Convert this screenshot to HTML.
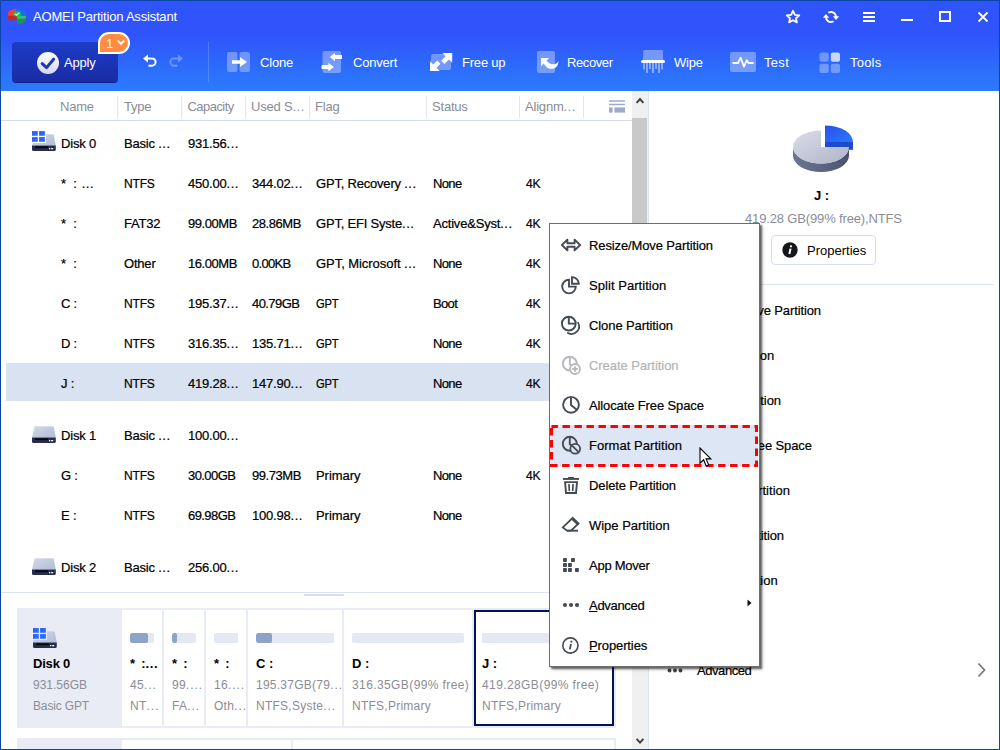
<!DOCTYPE html>
<html lang="en">
<head>
<meta charset="utf-8">
<title>AOMEI Partition Assistant</title>
<style>
*{box-sizing:border-box;margin:0;padding:0}
html,body{width:1000px;height:750px;overflow:hidden;background:#fff}
body{position:relative;color:#000;font-family:"Liberation Sans",sans-serif;font-size:13px;letter-spacing:-0.2px;-webkit-font-smoothing:antialiased}
.abs{position:absolute}
.t{position:absolute;white-space:nowrap;line-height:20px;height:20px}
/* window frame */
#frame{position:absolute;left:0;top:0;width:1000px;height:750px;border:1px solid #0a46a8;z-index:50;pointer-events:none}
/* header */
#hdr{position:absolute;left:0;top:0;width:1000px;height:91px;background:linear-gradient(to bottom,#2f54fb 0,#2f54fb 35px,#2b7cfc 91px)}
#hdr .t{color:#fff}
.tb{font-size:13px;letter-spacing:-0.2px}
/* table */
.hd{color:#8b8c96}
.e{letter-spacing:.5px}
.e2{letter-spacing:1px}
.nm{word-spacing:0}
.st{word-spacing:4px}
.colsep{position:absolute;top:96px;width:1px;height:22px;background:#e1e5ee}
.row .t{top:11px;-webkit-text-stroke:.22px #000}
.row{position:absolute;left:0;width:632px;height:40px}
/* disk map */
.cell{position:absolute;top:610px;height:116px;background:#fff}
.cell .bar{position:absolute;left:8px;top:23px;height:10px;border-radius:2px;background:#e3e8f3;overflow:hidden}
.cell .bar i{display:block;height:10px;background:#8fa3c8;border-radius:2px}
.cell .n{position:absolute;left:8px;top:44px;font-weight:bold;font-size:13px;line-height:20px;white-space:nowrap;color:#000;letter-spacing:0}
.cell .g{position:absolute;left:8px;font-size:12px;line-height:20px;white-space:nowrap;color:#8b8c96;letter-spacing:.25px}
.g1{top:65px}.g2{top:86px}
/* menu */
#menu{position:absolute;left:549px;top:223px;width:211px;height:444px;background:#fff;border:1px solid #6e6e6e;box-shadow:2px 2px 1.5px rgba(0,0,0,.5),3px 3px 3px rgba(0,0,0,.18);z-index:20}
#menu .mi{position:absolute;left:0;width:209px;height:40px}
#menu .mi .t{left:39px;top:11px;-webkit-text-stroke:.2px currentColor}
#menu .mi svg{position:absolute;left:11px;top:11px;overflow:visible}
u{text-decoration:underline;text-underline-offset:1px}
/* right panel */
.rp{position:absolute;left:697px;white-space:nowrap;line-height:20px;-webkit-text-stroke:.2px #000}
</style>
</head>
<body>

<!-- ================= HEADER ================= -->
<div id="hdr">
  <!-- logo -->
  <svg class="abs" style="left:7px;top:8px" width="20" height="17" viewBox="0 0 20 17">
    <path d="M9 0.9 C14 0.6 18.6 2.6 19 5.2 L19 8.8 L13 8 L9 6 Z" fill="#1f6de6"/>
    <path d="M1 7 L10.2 6.6 L10.2 11.6 C6.5 12.9 2 12.9 1 11.4 Z" fill="#c22a28"/>
    <path d="M1 5.2 C1.4 2.6 5 1 9 0.9 L9.2 7.4 L1 8 Z" fill="#f63c3a"/>
    <path d="M10 8 L18.9 8.2 L18.9 12.4 C18 14.6 14 15.8 10 15.8 Z" fill="#1e9450"/>
    <path d="M10 7.8 L18.9 8 L18.9 10.6 L10 10.8 Z" fill="#33c273"/>
    <ellipse cx="10.1" cy="5.9" rx="4" ry="2.7" fill="#12c252"/>
    <path d="M8 5.8 L9.6 7.2 L12.4 4.6" fill="none" stroke="#d8ffe0" stroke-width="1.1"/>
  </svg>
  <div class="t" style="left:33px;top:7px">AOMEI Partition Assistant</div>

  <!-- title bar buttons -->
  <svg class="abs" style="left:785px;top:9px" width="16" height="16" viewBox="0 0 16 16"><path d="M8 1.8 L9.9 5.9 L14.3 6.4 L11 9.3 L11.9 13.4 L8 11.3 L4.1 13.4 L5 9.3 L1.7 6.4 L6.1 5.9 Z" fill="none" stroke="#fff" stroke-width="1.8" stroke-linejoin="round"/></svg>
  <svg class="abs" style="left:822px;top:9px" width="18" height="16" viewBox="0 0 18 16">
    <path d="M7.1 3.3 A5 5 0 0 1 14 8" fill="none" stroke="#fff" stroke-width="2" stroke-linecap="round"/>
    <path d="M10.9 12.7 A5 5 0 0 1 4 8" fill="none" stroke="#fff" stroke-width="2" stroke-linecap="round"/>
    <path d="M10.9 7.2 L17.1 7.2 L14 11 Z" fill="#fff"/>
    <path d="M0.9 8.7 L7.1 8.7 L4 4.9 Z" fill="#fff"/>
  </svg>
  <div class="abs" style="left:863px;top:12px;width:12px;height:2px;background:#fff"></div>
  <div class="abs" style="left:863px;top:16px;width:12px;height:2px;background:#fff"></div>
  <div class="abs" style="left:863px;top:20px;width:12px;height:2px;background:#fff"></div>
  <div class="abs" style="left:901px;top:19px;width:12px;height:2px;background:#fff"></div>
  <div class="abs" style="left:939px;top:11px;width:12px;height:11px;border:2px solid #fff"></div>
  <svg class="abs" style="left:977px;top:11px" width="12" height="12" viewBox="0 0 12 12"><path d="M1.5 1.5 L10.5 10.5 M10.5 1.5 L1.5 10.5" stroke="#fff" stroke-width="1.8"/></svg>

  <!-- Apply button -->
  <div class="abs" style="left:12px;top:42px;width:106px;height:40px;border-radius:4px;background:linear-gradient(to bottom,#1d3cc8 0,#1a2ca4 100%);box-shadow:0 1px 0 #0f1f86"></div>
  <svg class="abs" style="left:36px;top:51px" width="24" height="24" viewBox="0 0 24 24">
    <defs><linearGradient id="gA" x1="0" y1="0" x2="0" y2="1"><stop offset="0" stop-color="#ffffff"/><stop offset="1" stop-color="#d2d8f2"/></linearGradient></defs>
    <circle cx="12" cy="12" r="11" fill="url(#gA)"/>
    <path d="M6.2 12.6 L10.6 16.6 L17.6 8.2" fill="none" stroke="#2437b2" stroke-width="3" stroke-linecap="round" stroke-linejoin="round"/>
  </svg>
  <div class="t tb" style="left:64px;top:53px">Apply</div>
  <!-- badge -->
  <div class="abs" style="left:98px;top:32px;width:32px;height:22px;border:2px solid #fff;border-radius:11px 11px 11px 0;background:#ff8c42"></div>
  <div class="t" style="left:106px;top:34px;font-size:13px;color:#fff">1</div>
  <svg class="abs" style="left:117px;top:40px" width="8" height="6" viewBox="0 0 8 6"><path d="M1.3 1.2 L4 3.9 L6.7 1.2" fill="none" stroke="#fff" stroke-width="1.9" stroke-linecap="round"/></svg>

  <!-- undo / redo -->
  <svg class="abs" style="left:142px;top:53px" width="16" height="16" viewBox="0 0 16 16"><path d="M5.5 5.5 H10 A3.6 3.6 0 0 1 10 12.7 H6.5" fill="none" stroke="#fff" stroke-width="2"/><path d="M1 5.5 L6 1.5 L6 9.5 Z" fill="#fff"/></svg>
  <svg class="abs" style="left:168px;top:53px;opacity:.3" width="16" height="16" viewBox="0 0 16 16"><path d="M10.5 5.5 H6 A3.6 3.6 0 0 0 6 12.7 H9.5" fill="none" stroke="#fff" stroke-width="2"/><path d="M15 5.5 L10 1.5 L10 9.5 Z" fill="#fff"/></svg>

  <div class="abs" style="left:208px;top:42px;width:1px;height:40px;background:rgba(255,255,255,.17)"></div>

  <!-- Clone -->
  <svg class="abs" style="left:226px;top:51px" width="26" height="22" viewBox="0 0 26 22">
    <rect x="1" y="1" width="10.5" height="20" rx="2" fill="#fff" fill-opacity=".32"/>
    <rect x="13.5" y="1" width="10.5" height="20" rx="2" fill="#fff" fill-opacity=".32"/>
    <path d="M6 9.2 H14 V6 L21 11 L14 16 V12.8 H6 Z" fill="#fff"/>
  </svg>
  <div class="t tb" style="left:260px;top:53px">Clone</div>

  <!-- Convert -->
  <svg class="abs" style="left:320px;top:50px" width="24" height="24" viewBox="0 0 24 24">
    <rect x="2.5" y="1" width="18.5" height="22" rx="2" fill="#fff" fill-opacity=".34"/>
    <path d="M22 5 H15 V2.8 L9.8 7 L15 11.2 V9 H22 Z" fill="#fff"/>
    <path d="M1.6 15 H8.4 V12.8 L13.8 17 L8.4 21.2 V19 H1.6 Z" fill="#fff"/>
  </svg>
  <div class="t tb" style="left:353px;top:53px">Convert</div>

  <!-- Free up -->
  <svg class="abs" style="left:428px;top:51px" width="26" height="22" viewBox="0 0 26 22">
    <rect x="3" y="3" width="20" height="16" rx="2" fill="#fff" fill-opacity=".32"/>
    <path d="M14.5 2 H24.2 V11.7 L21 8.5 L16.4 13.1 L13.1 9.8 L17.7 5.2 Z" fill="#fff"/>
    <path d="M11.7 20 H2 V10.3 L5.2 13.5 L9.2 9.5 L12.5 12.8 L8.5 16.8 Z" fill="#fff"/>
  </svg>
  <div class="t tb" style="left:462px;top:53px">Free up</div>

  <!-- Recover -->
  <svg class="abs" style="left:536px;top:50px" width="24" height="24" viewBox="0 0 24 24">
    <rect x="1" y="1" width="18" height="22" rx="2" fill="#fff" fill-opacity=".34"/>
    <path d="M5 8 L13.2 8 L10.6 10.6 C12.6 14.2 17.2 15.4 20.4 13.4 C21.4 12.6 22 11.8 22.2 10.8 C23 14.6 20.4 18.6 16.2 18.8 C12.2 19 9.2 16.4 7.8 13.4 L5 16.2 Z" fill="#fff"/>
  </svg>
  <div class="t tb" style="left:567px;top:53px;letter-spacing:-0.4px">Recover</div>

  <!-- Wipe -->
  <svg class="abs" style="left:640px;top:49px" width="26" height="25" viewBox="0 0 26 25">
    <rect x="3" y="1" width="20" height="11" rx="1.5" fill="#fff" fill-opacity=".34"/>
    <rect x="1" y="11" width="24" height="3" rx="1.5" fill="#fff"/>
    <path d="M4 14 V20.5 M10 14 V20 M16 14 V20 M22 14 V20.5" stroke="#fff" stroke-opacity=".42" stroke-width="2"/>
    <path d="M7 14 V24 M13 14 V24 M19 14 V24" stroke="#fff" stroke-opacity=".42" stroke-width="2"/>
  </svg>
  <div class="t tb" style="left:674px;top:53px">Wipe</div>

  <!-- Test -->
  <svg class="abs" style="left:729px;top:51px" width="28" height="22" viewBox="0 0 28 22">
    <rect x="1" y="1" width="26" height="20" rx="2" fill="#fff" fill-opacity=".34"/>
    <path d="M3.5 12 H9 L11.6 6.6 L15 15.6 L17.8 9.2 L19.6 12 H24.5" fill="none" stroke="#fff" stroke-width="1.8" stroke-linejoin="round"/>
  </svg>
  <div class="t tb" style="left:764px;top:53px;letter-spacing:0.3px">Test</div>

  <!-- Tools -->
  <svg class="abs" style="left:817.5px;top:50.5px" width="24" height="24" viewBox="0 0 24 24">
    <rect x="1.5" y="1.5" width="9.2" height="9.2" rx="2" fill="#fff" fill-opacity=".32"/>
    <rect x="12.8" y="1.5" width="9.2" height="9.2" rx="2" fill="#fff" fill-opacity=".75"/>
    <rect x="1.5" y="12.8" width="9.2" height="9.2" rx="2" fill="#fff" fill-opacity=".32"/>
    <rect x="12.8" y="12.8" width="9.2" height="9.2" rx="2" fill="#fff" fill-opacity=".32"/>
  </svg>
  <div class="t tb" style="left:850px;top:53px;letter-spacing:0.2px">Tools</div>
</div>

<!-- ================= TABLE ================= -->
<div id="table">
  <div class="t hd" style="top:97px;left:60px">Name</div>
  <div class="t hd" style="top:97px;left:124px">Type</div>
  <div class="t hd" style="top:97px;left:187.5px;letter-spacing:-0.55px">Capacity</div>
  <div class="t hd" style="top:97px;left:251px">Used S<span class="e">...</span></div>
  <div class="t hd" style="top:97px;left:315px">Flag</div>
  <div class="t hd" style="top:97px;left:432px">Status</div>
  <div class="t hd" style="top:97px;left:525px">Alignm<span class="e">...</span></div>
  <div class="colsep" style="left:117px"></div>
  <div class="colsep" style="left:181px"></div>
  <div class="colsep" style="left:245px"></div>
  <div class="colsep" style="left:309px"></div>
  <div class="colsep" style="left:426px"></div>
  <div class="colsep" style="left:519px"></div>
  <div class="colsep" style="left:583px"></div>
  <div class="abs" style="left:1px;top:120px;width:631px;height:1px;background:#d5dcec"></div>
  <svg class="abs" style="left:609px;top:100px" width="16" height="13" viewBox="0 0 16 13"><path d="M0 1 H16 M0 4.5 H16" stroke="#9caacd" stroke-width="1.6"/><rect x="0" y="7.4" width="3.6" height="5.2" fill="#9caacd"/><rect x="5.4" y="7.4" width="10.6" height="5.2" fill="#9caacd"/></svg>
  <div class="abs" style="left:6px;top:363px;width:626px;height:38px;background:#d8e2f1"></div>
  <svg class="abs" style="left:32px;top:131px" width="25" height="21" viewBox="0 0 25 21">
      <defs><linearGradient id="dk0" x1="0" y1="0" x2="1" y2="1"><stop offset="0" stop-color="#d3d9e8"/><stop offset="1" stop-color="#b1bbd4"/></linearGradient>
      <linearGradient id="wn0" x1="0" y1="0" x2="1" y2="1"><stop offset="0" stop-color="#2c54fb"/><stop offset="1" stop-color="#2e78fb"/></linearGradient></defs>
      <path d="M3.6 3.2 H20.6 Q21.6 3.2 21.9 4.2 L23.8 14.8 H0 L2.3 4.2 Q2.6 3.2 3.6 3.2 Z" fill="url(#dk0)"/>
      <path d="M0 14.4 H23.8 V18.4 Q23.8 20 22.2 20 H1.6 Q0 20 0 18.4 Z" fill="#262e4c"/>
      <rect x="3" y="15.4" width="13" height="1.7" fill="#05070f"/>
      <rect x="17" y="17" width="1.3" height="1.3" fill="#fff"/><rect x="19.2" y="17" width="2" height="1.3" fill="#fff"/>
      <rect x="0" y="0" width="14" height="12" fill="#fff"/>
      <rect x="0" y="0.1" width="5.8" height="4.7" fill="url(#wn0)"/><rect x="7.1" y="0.1" width="5.8" height="4.7" fill="url(#wn0)"/>
      <rect x="0" y="6.1" width="5.8" height="4.7" fill="url(#wn0)"/><rect x="7.1" y="6.1" width="5.8" height="4.7" fill="url(#wn0)"/>
    </svg>
  <svg class="abs" style="left:32px;top:426px" width="25" height="18" viewBox="0 0 25 18">
      <defs><linearGradient id="dk1" x1="0" y1="0" x2="1" y2="1"><stop offset="0" stop-color="#d3d9e8"/><stop offset="1" stop-color="#b1bbd4"/></linearGradient></defs>
      <path d="M3.6 0.2 H20.6 Q21.6 0.2 21.9 1.2 L23.8 11.8 H0 L2.3 1.2 Q2.6 0.2 3.6 0.2 Z" fill="url(#dk1)"/>
      <path d="M0 11.4 H23.8 V15.4 Q23.8 17 22.2 17 H1.6 Q0 17 0 15.4 Z" fill="#262e4c"/>
      <rect x="3" y="12.4" width="13" height="1.7" fill="#05070f"/>
      <rect x="17" y="14" width="1.3" height="1.3" fill="#fff"/><rect x="19.2" y="14" width="2" height="1.3" fill="#fff"/>
    </svg>
  <svg class="abs" style="left:32px;top:558px" width="25" height="18" viewBox="0 0 25 18">
      <defs><linearGradient id="dk2" x1="0" y1="0" x2="1" y2="1"><stop offset="0" stop-color="#d3d9e8"/><stop offset="1" stop-color="#b1bbd4"/></linearGradient></defs>
      <path d="M3.6 0.2 H20.6 Q21.6 0.2 21.9 1.2 L23.8 11.8 H0 L2.3 1.2 Q2.6 0.2 3.6 0.2 Z" fill="url(#dk2)"/>
      <path d="M0 11.4 H23.8 V15.4 Q23.8 17 22.2 17 H1.6 Q0 17 0 15.4 Z" fill="#262e4c"/>
      <rect x="3" y="12.4" width="13" height="1.7" fill="#05070f"/>
      <rect x="17" y="14" width="1.3" height="1.3" fill="#fff"/><rect x="19.2" y="14" width="2" height="1.3" fill="#fff"/>
    </svg>
  <div class="row" style="top:123px"><div class="t nm" style="left:61px">Disk 0</div><div class="t" style="left:124px">Basic <span class="e">...</span></div><div class="t" style="left:188px">931.56<span class="e">...</span></div></div>
  <div class="row" style="top:163px"><div class="t nm" style="left:61px"><span class="st">* :</span><span style="word-spacing:1.6px"> </span><span class="e">...</span></div><div class="t" style="left:124px;transform:scaleX(.925);transform-origin:0 0">NTFS</div><div class="t" style="left:188px">450.00<span class="e">...</span></div><div class="t" style="left:252px">344.02<span class="e">...</span></div><div class="t" style="left:316px">GPT, Recovery <span class="e">...</span></div><div class="t" style="left:433px;letter-spacing:-0.65px">None</div><div class="t" style="left:526px;transform:scaleX(.93);transform-origin:0 0">4K</div></div>
  <div class="row" style="top:203px"><div class="t nm st" style="left:61px">* :</div><div class="t" style="left:124px">FAT32</div><div class="t" style="left:188px;letter-spacing:-0.45px">99.00MB</div><div class="t" style="left:252px;letter-spacing:-0.45px">28.86MB</div><div class="t" style="left:316px">GPT, EFI Syste<span class="e">...</span></div><div class="t" style="left:433px">Active&amp;Syst<span class="e">...</span></div><div class="t" style="left:526px;transform:scaleX(.93);transform-origin:0 0">4K</div></div>
  <div class="row" style="top:243px"><div class="t nm st" style="left:61px">* :</div><div class="t" style="left:124px">Other</div><div class="t" style="left:188px;letter-spacing:-0.45px">16.00MB</div><div class="t" style="left:252px;letter-spacing:-0.7px">0.00KB</div><div class="t" style="left:316px;letter-spacing:-0.05px">GPT, Microsoft <span class="e">...</span></div><div class="t" style="left:433px;letter-spacing:-0.65px">None</div><div class="t" style="left:526px;transform:scaleX(.93);transform-origin:0 0">4K</div></div>
  <div class="row" style="top:283px"><div class="t nm" style="left:61px">C :</div><div class="t" style="left:124px;transform:scaleX(.925);transform-origin:0 0">NTFS</div><div class="t" style="left:188px">195.37<span class="e">...</span></div><div class="t" style="left:252px;letter-spacing:-0.58px">40.79GB</div><div class="t" style="left:316px;transform:scaleX(.86);transform-origin:0 0">GPT</div><div class="t" style="left:433px;letter-spacing:-0.65px">Boot</div><div class="t" style="left:526px;transform:scaleX(.93);transform-origin:0 0">4K</div></div>
  <div class="row" style="top:323px"><div class="t nm" style="left:61px">D :</div><div class="t" style="left:124px;transform:scaleX(.925);transform-origin:0 0">NTFS</div><div class="t" style="left:188px">316.35<span class="e">...</span></div><div class="t" style="left:252px">135.71<span class="e">...</span></div><div class="t" style="left:316px;transform:scaleX(.86);transform-origin:0 0">GPT</div><div class="t" style="left:433px;letter-spacing:-0.65px">None</div><div class="t" style="left:526px;transform:scaleX(.93);transform-origin:0 0">4K</div></div>
  <div class="row" style="top:363px"><div class="t nm" style="left:61px">J :</div><div class="t" style="left:124px;transform:scaleX(.925);transform-origin:0 0">NTFS</div><div class="t" style="left:188px">419.28<span class="e">...</span></div><div class="t" style="left:252px">147.90<span class="e">...</span></div><div class="t" style="left:316px;transform:scaleX(.86);transform-origin:0 0">GPT</div><div class="t" style="left:433px;letter-spacing:-0.65px">None</div><div class="t" style="left:526px;transform:scaleX(.93);transform-origin:0 0">4K</div></div>
  <div class="row" style="top:415px"><div class="t nm" style="left:61px">Disk 1</div><div class="t" style="left:124px">Basic <span class="e">...</span></div><div class="t" style="left:188px">100.00<span class="e">...</span></div></div>
  <div class="row" style="top:455px"><div class="t nm" style="left:61px">G :</div><div class="t" style="left:124px;transform:scaleX(.925);transform-origin:0 0">NTFS</div><div class="t" style="left:188px;letter-spacing:-0.58px">30.00GB</div><div class="t" style="left:252px;letter-spacing:-0.45px">99.73MB</div><div class="t" style="left:316px;letter-spacing:-0.05px">Primary</div><div class="t" style="left:433px;letter-spacing:-0.65px">None</div><div class="t" style="left:526px;transform:scaleX(.93);transform-origin:0 0">4K</div></div>
  <div class="row" style="top:495px"><div class="t nm" style="left:61px">E :</div><div class="t" style="left:124px;transform:scaleX(.925);transform-origin:0 0">NTFS</div><div class="t" style="left:188px;letter-spacing:-0.58px">69.98GB</div><div class="t" style="left:252px">100.98<span class="e">...</span></div><div class="t" style="left:316px;letter-spacing:-0.05px">Primary</div><div class="t" style="left:433px;letter-spacing:-0.65px">None</div></div>
  <div class="row" style="top:547px"><div class="t nm" style="left:61px">Disk 2</div><div class="t" style="left:124px">Basic <span class="e">...</span></div><div class="t" style="left:188px">256.00<span class="e">...</span></div></div>
  <div class="abs" style="left:632px;top:91px;width:17px;height:658px;background:#f0f0f0;border-right:1px solid #dbe3f3"></div>
  <div class="abs" style="left:632px;top:118px;width:15px;height:330px;background:#c9c9c9"></div>
  <svg class="abs" style="left:635px;top:96px" width="10" height="8" viewBox="0 0 10 8"><path d="M1.6 6.8 L5 3 L8.4 6.8" fill="none" stroke="#3c3c3c" stroke-width="1.9"/></svg>
  <svg class="abs" style="left:635px;top:737px" width="10" height="8" viewBox="0 0 10 8"><path d="M1.6 1.8 L5 5.6 L8.4 1.8" fill="none" stroke="#3c3c3c" stroke-width="1.9"/></svg>
  <div class="abs" style="left:1px;top:592px;width:631px;height:1px;background:#dbe2f1"></div>
  <div class="abs" style="left:304px;top:594px;width:40px;height:2px;background:#d6dfed"></div>
</div>

<!-- ================= DISK MAP ================= -->
<div id="map">
  <div class="abs" style="left:17px;top:608px;width:599px;height:120px;background:#e9ecf4"></div>
  <div class="abs" style="left:17px;top:738px;width:599px;height:12px;background:#e9ecf4"></div>
  <div class="abs" style="left:122px;top:740px;width:169px;height:10px;background:#fff"></div>
  <div class="abs" style="left:293px;top:740px;width:321px;height:10px;background:#fff"></div>
  <svg class="abs" style="left:33px;top:628px" width="25" height="21" viewBox="0 0 25 21">
      <defs><linearGradient id="dk9" x1="0" y1="0" x2="1" y2="1"><stop offset="0" stop-color="#d3d9e8"/><stop offset="1" stop-color="#b1bbd4"/></linearGradient>
      <linearGradient id="wn9" x1="0" y1="0" x2="1" y2="1"><stop offset="0" stop-color="#2c54fb"/><stop offset="1" stop-color="#2e78fb"/></linearGradient></defs>
      <path d="M3.6 3.2 H20.6 Q21.6 3.2 21.9 4.2 L23.8 14.8 H0 L2.3 4.2 Q2.6 3.2 3.6 3.2 Z" fill="url(#dk9)"/>
      <path d="M0 14.4 H23.8 V18.4 Q23.8 20 22.2 20 H1.6 Q0 20 0 18.4 Z" fill="#262e4c"/>
      <rect x="3" y="15.4" width="13" height="1.7" fill="#05070f"/>
      <rect x="17" y="17" width="1.3" height="1.3" fill="#fff"/><rect x="19.2" y="17" width="2" height="1.3" fill="#fff"/>
      <rect x="0" y="0" width="14" height="12" fill="#e9ecf4"/>
      <rect x="0" y="0.1" width="5.8" height="4.7" fill="url(#wn9)"/><rect x="7.1" y="0.1" width="5.8" height="4.7" fill="url(#wn9)"/>
      <rect x="0" y="6.1" width="5.8" height="4.7" fill="url(#wn9)"/><rect x="7.1" y="6.1" width="5.8" height="4.7" fill="url(#wn9)"/>
    </svg>
  <div class="t" style="left:33px;top:654px;font-weight:bold;font-size:13px;color:#000;letter-spacing:-0.2px">Disk 0</div>
  <div class="t" style="left:33px;top:675px;color:#8b8c96;font-size:12px;letter-spacing:0">931.56GB</div>
  <div class="t" style="left:33px;top:696px;color:#8b8c96;font-size:12px;letter-spacing:-0.15px">Basic GPT</div>
  <div class="cell" style="left:122px;width:40px"><div class="bar" style="width:24px"><i style="width:18px"></i></div><div class="n" style="word-spacing:2.5px">* :<span style="letter-spacing:.6px">...</span></div><div class="g g1">45<span class="e2">...</span></div><div class="g g2">NT<span class="e2">...</span></div></div>
  <div class="cell" style="left:164px;width:40px"><div class="bar" style="width:24px"><i style="width:5px"></i></div><div class="n" style="word-spacing:2.5px">* :</div><div class="g g1">99<span class="e2">....</span></div><div class="g g2">FA<span class="e2">...</span></div></div>
  <div class="cell" style="left:206px;width:40px"><div class="bar" style="width:24px"></div><div class="n" style="word-spacing:2.5px">* :</div><div class="g g1">16<span class="e2">....</span></div><div class="g g2">Oth<span class="e2">...</span></div></div>
  <div class="cell" style="left:248px;width:94px"><div class="bar" style="width:78px"><i style="width:16px"></i></div><div class="n">C :</div><div class="g g1">195.37GB(79<span class="e2">...</span></div><div class="g g2">NTFS,Syste<span class="e2">...</span></div></div>
  <div class="cell" style="left:344px;width:128px"><div class="bar" style="width:112px"></div><div class="n">D :</div><div class="g g1" style="letter-spacing:.4px">316.35GB(99% free)</div><div class="g g2">NTFS,Primary</div></div>
  <div class="cell" style="left:474px;width:140px;border:2px solid #05105c"><div class="bar" style="width:112px;left:6px;top:21px"></div><div class="n" style="left:6px;margin-top:-2px">J :</div><div class="g g1" style="left:6px;margin-top:-2px;letter-spacing:.4px">419.28GB(99% free)</div><div class="g g2" style="left:6px;margin-top:-2px">NTFS,Primary</div></div>
</div>

<!-- ================= RIGHT PANEL ================= -->
<div id="right">
  <!-- pie -->
  <svg class="abs" style="left:788px;top:122px" width="70" height="52" viewBox="0 0 70 52">
    <defs>
      <linearGradient id="pg1" x1="0" y1="0" x2="1" y2="1"><stop offset="0" stop-color="#dadde8"/><stop offset="1" stop-color="#aeb4c8"/></linearGradient>
      <linearGradient id="pg2" x1="0" y1="0" x2="1" y2="0"><stop offset="0" stop-color="#6c7692"/><stop offset=".6" stop-color="#5a6480"/><stop offset="1" stop-color="#48526e"/></linearGradient>
      <linearGradient id="pg3" x1="0" y1="0" x2="1" y2="1"><stop offset="0" stop-color="#2750ee"/><stop offset="1" stop-color="#2a78fb"/></linearGradient>
    </defs>
    <!-- side -->
    <path d="M5 25 A28 16.5 0 0 0 61 25 L61 33.5 A28 16.5 0 0 1 5 33.5 Z" fill="url(#pg2)"/>
    <!-- blue slice side -->
    <path d="M37 20 L65 20 L65 27.8 L37 27.8 Z" fill="#1d4bcb"/>
    <!-- top (three quarters) -->
    <path d="M33 25 L33 8.5 A28 16.5 0 1 0 61 25 Z" fill="url(#pg1)"/>
    <!-- blue slice top -->
    <path d="M37 20 L37 3.5 A28 16.5 0 0 1 65 20 Z" fill="url(#pg3)"/>
  </svg>
  <div class="t" style="left:814px;top:186px;font-weight:bold;color:#000;letter-spacing:0">J :</div>
  <div class="t" style="left:745px;top:209px;color:#8b8c96;letter-spacing:-0.15px">419.28 GB(99% free),NTFS</div>
  <div class="abs" style="left:771px;top:235px;width:105px;height:30px;border:1px solid #d7def0;border-radius:4px;background:#fff"></div>
  <svg class="abs" style="left:781.5px;top:241.5px" width="16" height="16" viewBox="0 0 16 16"><circle cx="8" cy="8" r="7.7" fill="#15161c"/><path d="M8.5 6.6 L7.4 12" stroke="#fff" stroke-width="2"/><circle cx="9" cy="4.3" r="1.15" fill="#fff"/></svg>
  <div class="t" style="left:807px;top:241px;letter-spacing:0">Properties</div>
  <div class="abs" style="left:655px;top:284px;width:339px;height:1px;background:#dbe2f1"></div>
  <div class="rp" style="top:301px;letter-spacing:-0.12px">Resize/Move Partition</div>
  <div class="rp" style="top:346px;letter-spacing:0.05px">Split Partition</div>
  <div class="rp" style="top:391px;letter-spacing:-0.09px">Clone Partition</div>
  <div class="rp" style="top:436px;letter-spacing:-0.12px">Allocate Free Space</div>
  <div class="rp" style="top:481px;letter-spacing:0.04px">Format Partition</div>
  <div class="rp" style="top:526px;letter-spacing:-0.12px">Delete Partition</div>
  <div class="rp" style="top:571px;letter-spacing:-0.02px">Wipe Partition</div>
  <div class="rp" style="top:616px;letter-spacing:-0.26px">App Mover</div>
  <div class="rp" style="top:661px;letter-spacing:-0.43px">Advanced</div>
  <svg class="abs" style="left:667px;top:668px" width="16" height="5" viewBox="0 0 16 5"><circle cx="2.5" cy="2.5" r="1.9" fill="#444"/><circle cx="8" cy="2.5" r="1.9" fill="#444"/><circle cx="13.5" cy="2.5" r="1.9" fill="#444"/></svg>
  <svg class="abs" style="left:977px;top:662px" width="9" height="16" viewBox="0 0 9 16"><path d="M1.5 1.5 L7.5 8 L1.5 14.5" fill="none" stroke="#707070" stroke-width="1.6"/></svg>
</div>

<!-- ================= CONTEXT MENU ================= -->
<div id="menu">
  <div class="mi" style="top:1px"><svg width="20" height="20" viewBox="0 0 20 20"><path d="M0.9 9 L6.4 3.6 V7.2 H13.6 V3.6 L19.1 9 L13.6 14.4 V10.8 H6.4 V14.4 Z" fill="none" stroke="#454b52" stroke-width="1.9" stroke-linejoin="round"/></svg><div class="t" style="letter-spacing:-0.12px">Resize/Move Partition</div></div>
  <div class="mi" style="top:41px"><svg width="20" height="20" viewBox="0 0 20 20"><path d="M8 3.8 A6.8 6.8 0 1 0 14.8 10.6 H8 Z" fill="none" stroke="#454b52" stroke-width="1.9" stroke-linejoin="miter"/><path d="M11 1.1 A6.8 6.8 0 0 1 17.8 7.8 H11 Z" fill="none" stroke="#454b52" stroke-width="1.9" stroke-linejoin="miter"/></svg><div class="t" style="letter-spacing:0.05px">Split Partition</div></div>
  <div class="mi" style="top:81px"><svg width="20" height="20" viewBox="0 0 20 20"><circle cx="7.8" cy="7.6" r="6.9" fill="none" stroke="#454b52" stroke-width="1.9"/><path d="M7.8 1.2 V7.6 H14.2" fill="none" stroke="#454b52" stroke-width="1.9"/><path d="M17 6.6 A7.5 7.5 0 0 1 6.8 16.9" fill="none" stroke="#454b52" stroke-width="1.7" stroke-linecap="round"/></svg><div class="t" style="letter-spacing:-0.09px">Clone Partition</div></div>
  <div class="mi" style="top:121px"><svg width="20" height="20" viewBox="0 0 20 20"><circle cx="8.8" cy="7.6" r="6.9" fill="none" stroke="#b6b8bc" stroke-width="1.9"/><path d="M8.8 1.2 V8 L12 11" fill="none" stroke="#b6b8bc" stroke-width="1.9"/><circle cx="14" cy="13" r="5" fill="#fff" stroke="#b6b8bc" stroke-width="1.8"/><path d="M14 10.2 V15.8 M11.2 13 H16.8" stroke="#b6b8bc" stroke-width="1.8"/></svg><div class="t" style="color:#b4b4b4;letter-spacing:-0.05px">Create Partition</div></div>
  <div class="mi" style="top:161px"><svg width="20" height="20" viewBox="0 0 20 20"><circle cx="10" cy="8.8" r="7.9" fill="none" stroke="#454b52" stroke-width="1.9"/><path d="M10 1.4 V9 L15.8 13.8" fill="none" stroke="#454b52" stroke-width="1.9"/></svg><div class="t" style="letter-spacing:-0.12px">Allocate Free Space</div></div>
  <div class="abs" style="left:0;top:201px;width:208px;height:42px;background:#dce6f4"></div>
  <svg class="abs" style="left:0;top:201px" width="209" height="42" viewBox="0 0 209 42"><rect x="1.5" y="1.5" width="205" height="39" fill="none" stroke="#ff0000" stroke-width="3" stroke-dasharray="7.4 4.6" stroke-dashoffset="1" stroke-linecap="butt"/></svg>
  <div class="mi" style="top:201px"><svg width="20" height="20" viewBox="0 0 20 20"><circle cx="8.8" cy="7.8" r="7" fill="none" stroke="#454b52" stroke-width="1.9"/><path d="M8.8 1.4 V8.2 L12 10.6" fill="none" stroke="#454b52" stroke-width="1.9"/><circle cx="14.2" cy="12.8" r="4.9" fill="#dce6f4" stroke="#454b52" stroke-width="1.8"/><path d="M10.8 9.4 L17.6 16.2" stroke="#454b52" stroke-width="1.8"/></svg><div class="t" style="letter-spacing:0.04px">Format Partition</div></div>
  <div class="mi" style="top:241px"><svg width="20" height="20" viewBox="0 0 20 20"><rect x="2" y="2" width="16" height="1.9" fill="#454b52"/><rect x="7" y="0.9" width="6" height="1.4" rx=".6" fill="#454b52"/><path d="M4.1 6.1 H16 L15 17 H5 Z" fill="none" stroke="#454b52" stroke-width="1.9" stroke-linejoin="miter"/><path d="M8 8.6 L8.3 14.4 M12 8.6 L11.7 14.4" stroke="#454b52" stroke-width="1.7" stroke-linecap="round"/></svg><div class="t" style="letter-spacing:-0.12px">Delete Partition</div></div>
  <div class="mi" style="top:281px"><svg width="20" height="20" viewBox="0 0 20 20"><path d="M11.8 1.8 L17.6 7.4 L10 14.7 H6 L1.8 11.4 Z" fill="none" stroke="#454b52" stroke-width="1.8" stroke-linejoin="miter"/><path d="M11.4 3 L16.6 8" stroke="#454b52" stroke-width="2.4"/><path d="M6 14.7 H17" stroke="#454b52" stroke-width="1.9"/></svg><div class="t" style="letter-spacing:-0.02px">Wipe Partition</div></div>
  <div class="mi" style="top:321px"><svg width="20" height="20" viewBox="0 0 20 20"><rect x="2" y="2" width="3.9" height="3.9" rx=".7" fill="#454b52"/><rect x="10" y="2" width="3.9" height="3.9" rx=".7" fill="#454b52"/><rect x="2" y="7" width="3.9" height="3.9" rx=".7" fill="#454b52"/><rect x="7" y="7" width="3.9" height="3.9" rx=".7" fill="#454b52"/><rect x="2" y="12" width="3.9" height="3.9" rx=".7" fill="#454b52"/><rect x="7" y="12" width="3.9" height="3.9" rx=".7" fill="#454b52"/><rect x="14" y="12" width="3.9" height="3.9" rx=".7" fill="#454b52"/></svg><div class="t" style="letter-spacing:-0.26px">App Mover</div></div>
  <div class="mi" style="top:361px"><svg width="20" height="20" viewBox="0 0 20 20"><circle cx="4" cy="9" r="2.1" fill="#454b52"/><circle cx="10" cy="9" r="2.1" fill="#454b52"/><circle cx="16" cy="9" r="2.1" fill="#454b52"/></svg><div class="t" style="letter-spacing:-0.3px"><u>A</u>dvanced</div></div>
  <div class="mi" style="top:401px"><svg width="20" height="20" viewBox="0 0 20 20"><circle cx="9.4" cy="9.5" r="7.6" fill="none" stroke="#454b52" stroke-width="1.6"/><path d="M9.9 8 L8.9 13.4" stroke="#454b52" stroke-width="1.8"/><circle cx="10.4" cy="5.6" r="1.1" fill="#454b52"/></svg><div class="t" style="letter-spacing:-0.11px"><u>P</u>roperties</div></div>
  <svg class="abs" style="left:197px;top:375px" width="5" height="8" viewBox="0 0 5 8"><path d="M0.5 0.5 L4.5 4 L0.5 7.5 Z" fill="#111"/></svg>
  <svg class="abs" style="left:149px;top:223px" width="14" height="22" viewBox="0 0 14 22"><path d="M1 1 V16.2 L4.6 12.8 L7.2 19 L9.7 17.9 L7.1 11.9 H11.9 Z" fill="#fff" stroke="#000" stroke-width="1.1" stroke-linejoin="miter"/></svg>
</div>

<div id="frame"></div>
</body>
</html>
